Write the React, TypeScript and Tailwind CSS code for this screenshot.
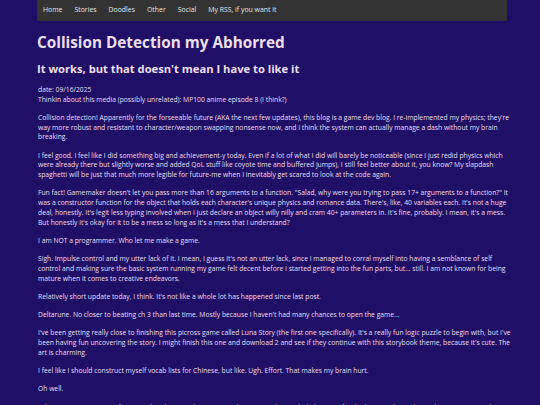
import React from 'react';

const links = ['Home', 'Stories', 'Doodles', 'Other', 'Social', 'My RSS, if you want it'];

const paragraphs = [
  "Collision detection! Apparently for the forseeable future (AKA the next few updates), this blog is a game dev blog. I re-implemented my physics; they're way more robust and resistant to character/weapon swapping nonsense now, and I think the system can actually manage a dash without my brain breaking.",
  "I feel good. I feel like I did something big and achievement-y today. Even if a lot of what I did will barely be noticeable (since I just redid physics which were already there but slightly worse and added QoL stuff like coyote time and buffered jumps), I still feel better about it, you know? My slapdash spaghetti will be just that much more legible for future-me when I inevitably get scared to look at the code again.",
  "Fun fact! Gamemaker doesn't let you pass more than 16 arguments to a function. \"Salad, why were you trying to pass 17+ arguments to a function?\" It was a constructor function for the object that holds each character's unique physics and romance data. There's, like, 40 variables each. It's not a huge deal, honestly. It's legit less typing involved when I just declare an object willy nilly and cram 40+ parameters in. It's fine, probably. I mean, it's a mess. But honestly it's okay for it to be a mess so long as it's a mess that I understand?",
  "I am NOT a programmer. Who let me make a game.",
  "Sigh. Impulse control and my utter lack of it. I mean, I guess it's not an utter lack, since I managed to corral myself into having a semblance of self control and making sure the basic system running my game felt decent before I started getting into the fun parts, but... still. I am not known for being mature when it comes to creative endeavors.",
  "Relatively short update today, I think. It's not like a whole lot has happened since last post.",
  "Deltarune. No closer to beating ch 3 than last time. Mostly because I haven't had many chances to open the game...",
  "I've been getting really close to finishing this picross game called Luna Story (the first one specifically). It's a really fun logic puzzle to begin with, but I've been having fun uncovering the story. I might finish this one and download 2 and see if they continue with this storybook theme, because it's cute. The art is charming.",
  "I feel like I should construct myself vocab lists for Chinese, but like. Ugh. Effort. That makes my brain hurt.",
  "Oh well.",
  "'Til next time! I'm praying for a couple calmer weeks coming up because it's been a little bit crazy for the last couple weeks. And I'm not too sure how much longer I can keep this pace up, honestly.",
];

export default function App() {
  return (
    <div className="h-[405px] w-[540px] overflow-hidden bg-[#200f66] font-['Open_Sans',sans-serif] text-[#eddff0]">
      <div className="ml-[37px] w-[470px]">
        <nav className="flex h-[21px] items-center gap-[12px] bg-[#333333] px-[6px] text-[6.9px] text-[#e6e6e6]">
          {links.map((l) => (
            <span key={l}>{l}</span>
          ))}
        </nav>
        <h1 className="mt-[10px] text-[15.3px] font-bold leading-[22px]">Collision Detection my Abhorred</h1>
        <h2 className="mt-[8px] text-[11.2px] font-bold leading-[15px]">It works, but that doesn't mean I have to like it</h2>
        <div className="mt-[9px] w-[476px] pl-[1px] text-[6.75px] leading-[9.7px]">
          <p>date: 09/16/2025</p>
          <p>Thinkin about this media (possibly unrelated): MP100 anime episode 8 (I think?)</p>
          {paragraphs.map((p, i) => (
            <p key={i} className="mt-[8.6px]">{p}</p>
          ))}
        </div>
      </div>
    </div>
  );
}
